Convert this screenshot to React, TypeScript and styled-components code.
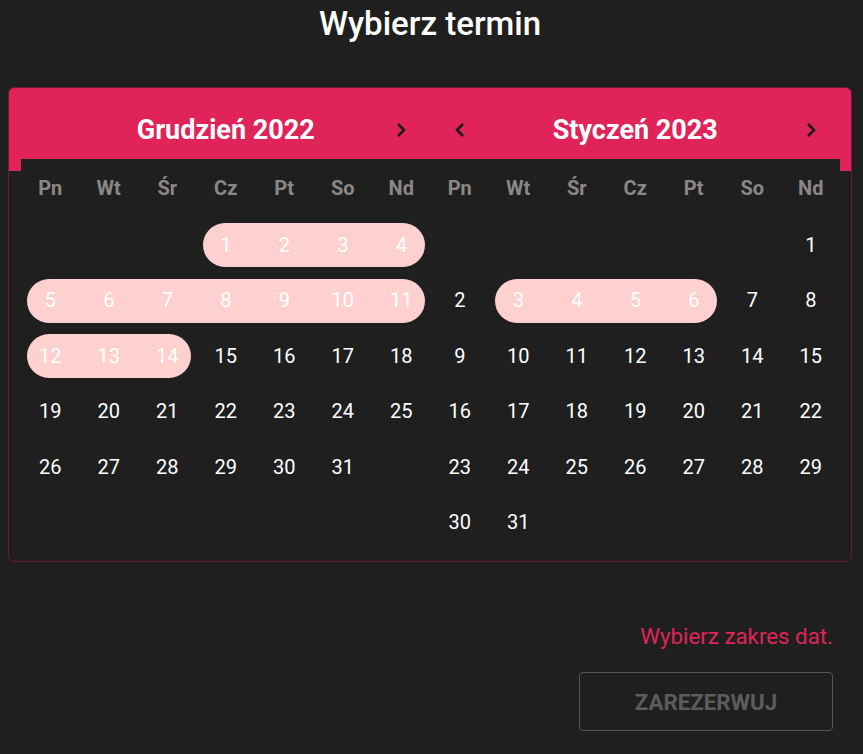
import React from 'react'
import styled, { createGlobalStyle } from 'styled-components'

const GlobalStyle = createGlobalStyle`
  body {
    margin: 0;
    background: #1f1f1f;
    font-family: Roboto, "Liberation Sans", sans-serif;
  }
`;

const RED = '#e0245a';

const Page = styled.div`
  padding: 0 11px 0 8px;
`;

const Title = styled.h1`
  margin: 0 0 39px;
  text-align: center;
  color: #fff;
  font-size: 33px;
  font-weight: 500;
  line-height: 48px;
`;

const Card = styled.div`
  width: 844px;
  box-sizing: border-box;
  border: 1px solid #6a1c36;
  border-radius: 6px;
  overflow: hidden;
`;

const Header = styled.div`
  display: grid;
  grid-template-columns: 1fr 1fr;
  background: ${RED};
  padding: 13px 11px 0 12px;
  height: 71px;
  box-sizing: border-box;
`;

const Body = styled.div`
  background: linear-gradient(to bottom, ${RED} 12px, transparent 12px);
  padding: 0 11px 11px 12px;
`;

const Months = styled.div`
  display: grid;
  grid-template-columns: 1fr 1fr;
  background: #1f1f1f;
`;

const MonthHead = styled.div`
  display: grid;
  grid-template-columns: repeat(7, 1fr);
  height: 58px;
  align-items: center;
`;

const MonthTitle = styled.div`
  grid-column: 2 / 7;
  text-align: center;
  color: #fff;
  font-size: 27px;
  font-weight: 700;
`;

const Arrow = styled.button<{ $col: number }>`
  grid-column: ${p => p.$col};
  justify-self: center;
  background: none;
  border: none;
  padding: 0;
  display: flex;
  cursor: pointer;
`;

const Grid = styled.div`
  display: grid;
  grid-template-columns: repeat(7, 58.5px);
  grid-auto-rows: 55.5px;
  grid-template-rows: 58px;
`;

const WeekDay = styled.div`
  display: flex;
  align-items: center;
  justify-content: center;
  color: #8b8787;
  font-size: 20px;
  font-weight: 700;
`;

const Day = styled.div<{ $col?: number; $inRange: boolean; $start: boolean; $end: boolean }>`
  position: relative;
  display: flex;
  align-items: center;
  justify-content: center;
  color: #fff;
  font-size: 20px;
  ${p => (p.$col ? `grid-column-start: ${p.$col};` : '')}

  &::before {
    content: '';
    display: ${p => (p.$inRange ? 'block' : 'none')};
    position: absolute;
    top: 6px;
    bottom: 5.5px;
    left: ${p => (p.$start ? '6px' : '0')};
    right: ${p => (p.$end ? '6px' : '0')};
    background: #ffd0d0;
    border-radius: ${p => `${p.$start ? '22px' : '0'} ${p.$end ? '22px 22px' : '0 0'} ${p.$start ? '22px' : '0'}`};
  }

  span {
    position: relative;
  }
`;

const Footer = styled.div`
  display: flex;
  flex-direction: column;
  align-items: flex-end;
  padding-right: 19px;
`;

const ErrorText = styled.div`
  margin-top: 62px;
  color: ${RED};
  font-size: 22.3px;
  line-height: 24px;
`;

const BookBtn = styled.button`
  margin-top: 24px;
  width: 254px;
  height: 59px;
  background: transparent;
  border: 1px solid #555;
  border-radius: 4px;
  color: #5c5c5c;
  font-family: Roboto, "Liberation Sans", sans-serif;
  font-size: 22.3px;
  font-weight: 700;
`;

const Chevron = ({ dir }: { dir: 'left' | 'right' }) => (
  <svg width="10" height="16" viewBox="0 0 10 16">
    <path
      d={dir === 'right' ? 'M2 2 L8 8 L2 14' : 'M8 2 L2 8 L8 14'}
      fill="none"
      stroke="#1a1a1a"
      strokeWidth="2.6"
    />
  </svg>
);

const weekDays = ['Pn', 'Wt', 'Śr', 'Cz', 'Pt', 'So', 'Nd'];

interface MonthData {
  title: string;
  firstCol: number; // 1 = Pn
  days: number;
  range: [number, number];
  prev: boolean;
}

const months: MonthData[] = [
  { title: 'Grudzień 2022', firstCol: 4, days: 31, range: [1, 14], prev: false },
  { title: 'Styczeń 2023', firstCol: 7, days: 31, range: [3, 6], prev: true },
];

const Month: React.FC<{ m: MonthData }> = ({ m }) => {
  const cells = [];
  for (let d = 1; d <= m.days; d++) {
    const col = ((m.firstCol - 1 + d - 1) % 7) + 1;
    const inRange = d >= m.range[0] && d <= m.range[1];
    cells.push(
      <Day
        key={d}
        $col={d === 1 ? m.firstCol : undefined}
        $inRange={inRange}
        $start={d === m.range[0] || col === 1}
        $end={d === m.range[1] || col === 7}
      >
        <span>{d}</span>
      </Day>
    );
  }
  return (
    <Grid>
      {weekDays.map(w => (
        <WeekDay key={w}>{w}</WeekDay>
      ))}
      {cells}
    </Grid>
  );
};

const App: React.FC = () => {
  return (
    <>
      <GlobalStyle />
      <Page>
        <Title>Wybierz termin</Title>
        <Card>
          <Header>
            {months.map(m => (
              <MonthHead key={m.title}>
                {m.prev && (
                  <Arrow $col={1}>
                    <Chevron dir="left" />
                  </Arrow>
                )}
                <MonthTitle>{m.title}</MonthTitle>
                <Arrow $col={7}>
                  <Chevron dir="right" />
                </Arrow>
              </MonthHead>
            ))}
          </Header>
          <Body>
            <Months>
              {months.map(m => (
                <Month key={m.title} m={m} />
              ))}
            </Months>
          </Body>
        </Card>
        <Footer>
          <ErrorText>Wybierz zakres dat.</ErrorText>
          <BookBtn disabled>ZAREZERWUJ</BookBtn>
        </Footer>
      </Page>
    </>
  )
}

export default App
